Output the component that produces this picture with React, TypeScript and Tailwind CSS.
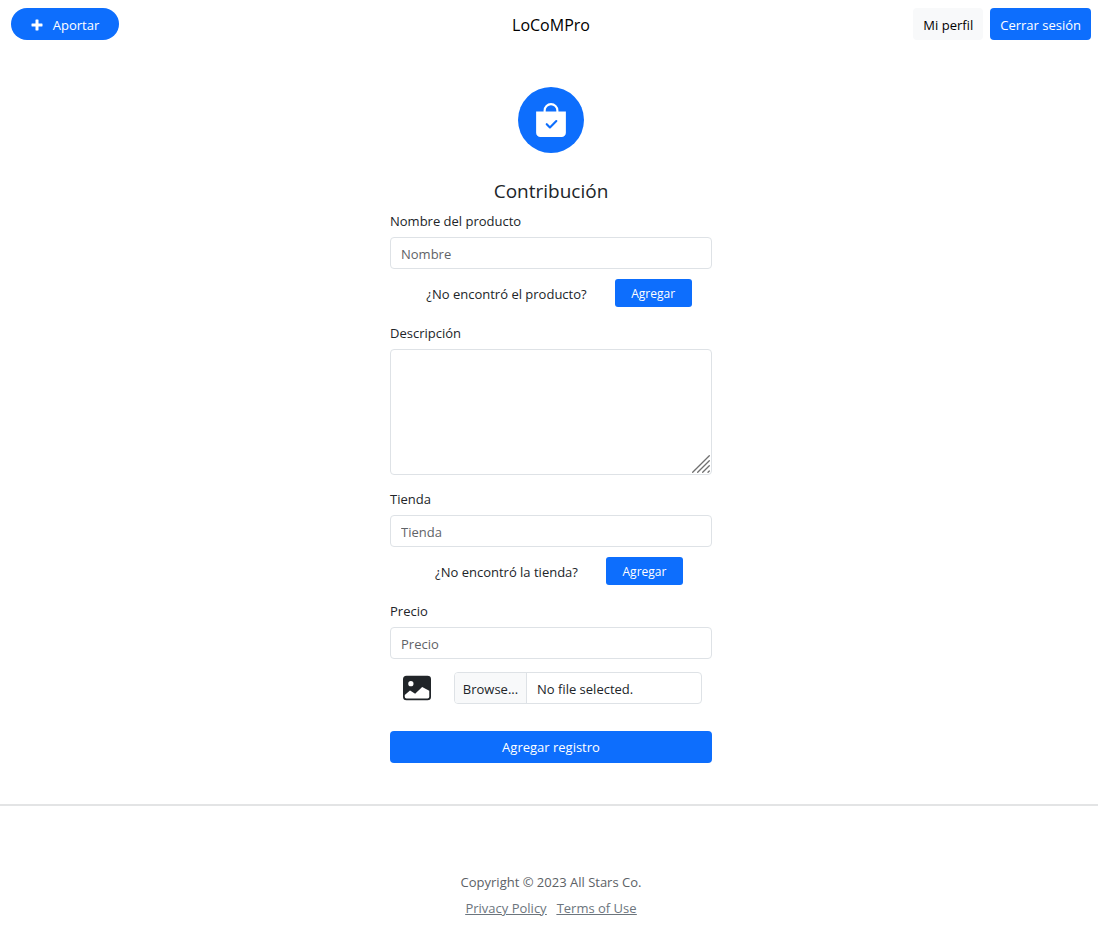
import React from "react";
import { BsBagCheckFill, BsImageFill } from "react-icons/bs";

const fieldClass =
  "block h-8 w-full rounded border border-[#dee2e6] bg-white px-2.5 pt-0.5 text-[#212529] placeholder:text-[#5f6367] placeholder:opacity-100 focus:border-[#86b7fe] focus:outline-none";

function Label({ htmlFor, children }: { htmlFor: string; children: React.ReactNode }) {
  return (
    <label htmlFor={htmlFor} className="mb-1.5 block leading-5">
      {children}
    </label>
  );
}

function AddPrompt({ text }: { text: string }) {
  return (
    <div className="mt-2.5 mb-4 flex h-7 items-center justify-center gap-7 pl-4">
      <span className="pt-0.5">{text}</span>
      <button type="button" className="h-7 w-[77px] rounded-[3px] bg-[#0d6efd] pt-0.5 text-xs text-white">
        Agregar
      </button>
    </div>
  );
}

function PlusIcon() {
  return (
    <svg viewBox="0 0 12 12" className="size-3" fill="currentColor" aria-hidden="true">
      <path d="M4.9.5h2.2q.4 0 .4.4v3.6h3.6q.4 0 .4.4v2.2q0 .4-.4.4H7.5v3.6q0 .4-.4.4H4.9q-.4 0-.4-.4V7.5H.9q-.4 0-.4-.4V4.900q0-.4.4-.4h3.600V.9q0-.4.4-.4z" />
    </svg>
  );
}

function ResizeGrip() {
  return (
    <svg
      viewBox="0 0 18 18"
      className="pointer-events-none absolute right-0.5 bottom-0.5 size-[18px]"
      stroke="#6f6f6f"
      strokeWidth="1.3"
      strokeLinecap="round"
      aria-hidden="true"
    >
      <path d="M.7 17.3 17.3.7M5.7 17.3 17.3 5.7M10.7 17.3l6.6-6.6M16 17.3l1.3-1.3" />
    </svg>
  );
}

export default function App() {
  return (
    <div className="min-h-screen bg-white font-['Open_Sans',sans-serif] text-[13px] leading-5 text-[#212529]">
      <header className="grid grid-cols-3 items-center py-2 pr-[7px] pl-[11px]">
        <a href="#aportar" className="flex h-8 w-[108px] items-center justify-center gap-2.5 rounded-full bg-[#0d6efd] pt-0.5 text-white">
          <PlusIcon />
          <span>Aportar</span>
        </a>
        <a href="#inicio" className="justify-self-center pt-0.5 text-base text-black">
          LoCoMPro
        </a>
        <nav className="flex gap-[7px] justify-self-end">
          <a href="#perfil" className="flex h-8 items-center rounded bg-[#f8f9fa] px-2.5 pt-0.5 text-black">
            Mi perfil
          </a>
          <button type="button" className="h-8 rounded bg-[#0d6efd] px-2.5 pt-0.5 text-white">
            Cerrar sesión
          </button>
        </nav>
      </header>

      <main className="flex flex-col items-center border-b-2 border-[#e3e4e5] pt-[39px] pb-[41px] pl-1">
        <div className="flex size-[66px] items-center justify-center rounded-full bg-[#0d6efd]">
          <BsBagCheckFill className="size-[34px] text-white" />
        </div>
        <h1 className="mt-[25px] mb-[7px] text-[19px] leading-[26px]">Contribución</h1>
        <form className="w-full max-w-[322px]" onSubmit={(e) => e.preventDefault()}>
          <Label htmlFor="nombre">Nombre del producto</Label>
          <input id="nombre" type="text" placeholder="Nombre" className={fieldClass} />
          <AddPrompt text="¿No encontró el producto?" />

          <Label htmlFor="descripcion">Descripción</Label>
          <div className="relative mb-3.5">
            <textarea
              id="descripcion"
              className="block h-[126px] w-full resize-none rounded border border-[#dee2e6] px-2.5 py-1.5 focus:border-[#86b7fe] focus:outline-none"
            />
            <ResizeGrip />
          </div>

          <Label htmlFor="tienda">Tienda</Label>
          <input id="tienda" type="text" placeholder="Tienda" className={fieldClass} />
          <AddPrompt text="¿No encontró la tienda?" />

          <Label htmlFor="precio">Precio</Label>
          <input id="precio" type="text" placeholder="Precio" className={fieldClass} />

          <div className="mt-[13px] mb-[27px] flex items-center gap-[23px] pr-2.5 pl-[13px]">
            <BsImageFill className="size-7 shrink-0" />
            <label
              htmlFor="imagen"
              className="relative flex h-8 flex-1 overflow-hidden rounded border border-[#dee2e6]"
            >
              <input id="imagen" type="file" accept="image/*" className="sr-only" />
              <span className="flex w-[72px] items-center justify-center border-r border-[#dee2e6] bg-[#f8f9fa] pt-0.5">Browse...</span>
              <span className="flex items-center px-2.5 pt-0.5">No file selected.</span>
            </label>
          </div>

          <button type="submit" className="h-8 w-full rounded bg-[#0d6efd] text-white">
            Agregar registro
          </button>
        </form>
      </main>

      <footer className="flex flex-col items-center gap-1.5 pt-[66px] pb-7 pl-1">
        <p className="text-[#5c6166]">Copyright © 2023 All Stars Co.</p>
        <div className="flex gap-2.5 text-[#6c757d] underline">
          <a href="#privacidad">Privacy Policy</a>
          <a href="#terminos">Terms of Use</a>
        </div>
      </footer>
    </div>
  );
}
